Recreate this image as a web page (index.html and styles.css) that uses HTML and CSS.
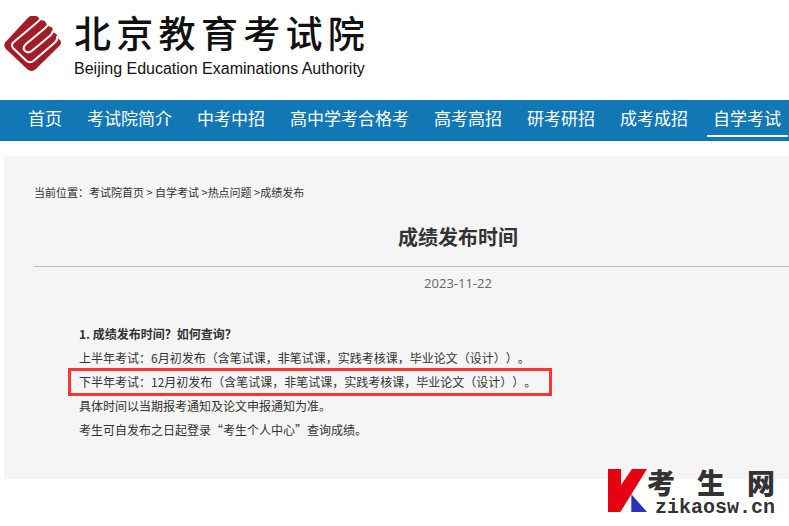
FILE: index.html
```
<!DOCTYPE html>
<html lang="zh-CN">
<head>
<meta charset="UTF-8">
<meta name="viewport" content="width=device-width, initial-scale=1.0">
<title>成绩发布时间 - 北京教育考试院</title>
<link rel="stylesheet" href="styles.css">
</head>
<body>

<header class="header">
    <svg class="logo" viewBox="0 0 174 168" aria-hidden="true">
        <path fill="#a31d29" d="M74 3Q80 -1 88 0H95Q104 1 106 8L108 13Q122 11 126 20L130 31Q143 30 146 39L149 50Q158 51 160 59L162 67Q176 78 168 88L95 160Q83 170 70 160L5 98Q-3 88 4 79Z"/>
        <g fill="none" stroke="#fff" stroke-width="6">
            <path d="M109 8Q106 15 97 21L29 78Q19 87 28 97L67 134Q78 143 89 134L152 80Q161 72 160 60"/>
            <path d="M130 28Q127 34 120 39L66 84Q54 96 63 105Q74 114 86 103L138 59Q146 52 147 43"/>
        </g>
    </svg>
    <div class="brand">
        <div class="brand-cn"><span>北</span><span>京</span><span>教</span><span>育</span><span>考</span><span>试</span><span>院</span></div>
        <div class="brand-en">Beijing Education Examinations Authority</div>
    </div>
</header>

<nav class="nav">
    <a href="#">首页</a>
    <a href="#">考试院简介</a>
    <a href="#">中考中招</a>
    <a href="#">高中学考合格考</a>
    <a href="#">高考高招</a>
    <a href="#">研考研招</a>
    <a href="#">成考成招</a>
    <a href="#" class="active">自学考试</a>
</nav>

<main class="panel">
    <div class="crumbs">当前位置：<a href="#">考试院首页</a> &gt; <a href="#">自学考试</a> &gt;<a href="#">热点问题</a> &gt;<a href="#">成绩发布</a></div>
    <article class="article">
        <h1>成绩发布时间</h1>
        <div class="date">2023-11-22</div>
        <div class="content">
            <p><strong>1. 成绩发布时间？如何查询？</strong></p>
            <p>上半年考试：6月初发布（含笔试课，非笔试课，实践考核课，毕业论文（设计））。</p>
            <p class="marked">下半年考试：12月初发布（含笔试课，非笔试课，实践考核课，毕业论文（设计））。</p>
            <p>具体时间以当期报考通知及论文申报通知为准。</p>
            <p>考生可自发布之日起登录“考生个人中心”查询成绩。</p>
        </div>
    </article>
</main>

<!-- 右下角水印 -->
<div class="watermark">
    <svg viewBox="0 0 117 129" aria-hidden="true">
        <path fill="#e60012" d="M0 0H39V48L72 0H117L37 129H0Z"/>
        <path fill="#2b31b5" d="M70 76L117 129H70Z"/>
    </svg>
    <div class="watermark-text">
        <div class="watermark-cn"><span>考</span><span>生</span><span>网</span></div>
        <div class="watermark-en">zikaosw.cn</div>
    </div>
</div>

</body>
</html>
```
FILE: styles.css
```
body {
    position: relative;
    min-height: 100vh;
    margin: 0;
    background: #fff;
    color: #333;
    font-family: "Noto Sans CJK SC", sans-serif;
    font-size: 12px;
    text-spacing-trim: space-all;
}
a {
    color: inherit;
    text-decoration: none;
}

/* 页头 */
.header {
    display: flex;
    align-items: flex-start;
    gap: 12px;
    height: 84px;
    padding: 8px 4px;
}
.logo {
    width: 58px;
    height: 56px;
    margin-top: 8px;
}
.brand {
    color: #111;
}
.brand-cn {
    display: flex;
    justify-content: space-between;
    font-size: 37px;
    font-weight: 500;
    line-height: 48px;
}
.brand-en {
    font-family: "Liberation Sans", Arial, sans-serif;
    font-size: 16px;
    line-height: 26px;
    white-space: nowrap;
}

/* 导航 */
.nav {
    display: flex;
    gap: 12px;
    height: 41px;
    padding-left: 22px;
    background: #1278b5;
    color: #fff;
    font-size: 17px;
    line-height: 35px;
    white-space: nowrap;
    overflow: hidden;
}
.nav a {
    height: 35px;
    padding: 0 7px 0 6px;
}
.nav .active {
    border-bottom: 2px solid #fff;
}

/* 正文 */
.panel {
    margin: 15px 0 0 4px;
    padding: 27px 0 37px 30px;
    background: #f5f5f5;
    overflow: hidden;
}
.crumbs {
    font-size: 11px;
    line-height: 18px;
}
.article {
    min-width: 848px;
}
.article h1 {
    margin: 0;
    padding: 21px 0 14px;
    border-bottom: 1px solid #bbb;
    font-size: 20px;
    line-height: 30px;
    text-align: center;
}
.date {
    color: #666;
    font-family: "Open Sans", sans-serif;
    font-size: 13px;
    line-height: 32px;
    text-align: center;
}
.content {
    padding: 23px 45px 0;
    line-height: 24px;
}
.content p {
    margin: 0;
}
.marked {
    position: relative;
    width: fit-content;
}
.marked::after {
    content: "";
    position: absolute;
    inset: -2px -16px -2px -11px;
    border: 3px solid #fb3434;
}

/* 水印 */
.watermark {
    position: absolute;
    right: 14px;
    bottom: 8px;
    display: flex;
    align-items: flex-start;
    gap: 8px;
    color: #333;
}
.watermark svg {
    width: 39px;
    height: 43px;
    margin-top: 3px;
}
.watermark-cn {
    display: flex;
    justify-content: space-between;
    margin-left: -8px;
    font-size: 28px;
    font-weight: 900;
    line-height: 32px;
}
.watermark-en {
    font-family: "Liberation Mono", monospace;
    font-size: 20px;
    font-weight: bold;
    line-height: 20px;
}
```
